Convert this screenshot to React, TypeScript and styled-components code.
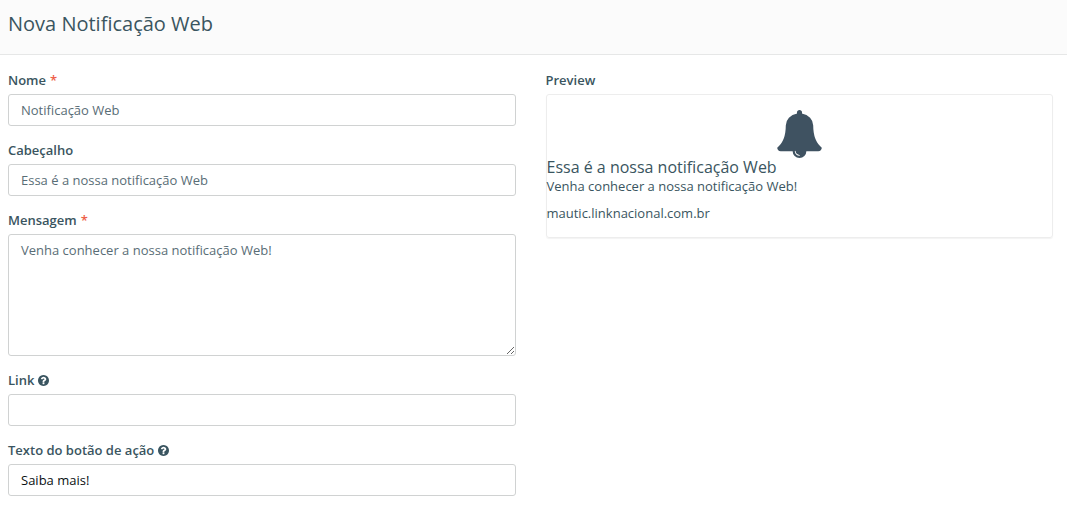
import { useId, useState } from "react";
import type { ReactNode } from "react";
import styled, { createGlobalStyle } from "styled-components";

const GlobalStyle = createGlobalStyle`
  *, *::before, *::after { box-sizing: border-box; }
  body {
    margin: 0;
    background: #fff;
    color: #3a5560;
    font: 13px/20px "Open Sans", "Noto Sans", sans-serif;
  }
`;

const PageHeader = styled.header`
  padding: 10px 8px 16px;
  background: #fbfbfb;
  border-bottom: 1px solid #e6e7e7;
`;

const PageTitle = styled.h1`
  margin: 0;
  font-size: 20px;
  line-height: 28px;
  font-weight: 400;
`;

const Columns = styled.main`
  display: grid;
  grid-template-columns: 1fr 1fr;
  align-items: start;
  gap: 30px;
  padding: 15px 14px 10px 8px;
`;

const Form = styled.form`
  display: flex;
  flex-direction: column;
  gap: 14px;
`;

const FieldGroup = styled.div`
  display: flex;
  flex-direction: column;
  gap: 4px;
`;

const Label = styled.label`
  display: flex;
  align-items: center;
  gap: 4px;
  font-weight: 600;
`;

const Required = styled.span`
  color: #ee5f4a;
`;

const Input = styled.input<{ $dark?: boolean }>`
  width: 100%;
  height: 32px;
  padding: 4px 12px;
  border: 1px solid #d0d2d2;
  border-radius: 3px;
  background: #fff;
  color: ${(p) => (p.$dark ? "#0a0f12" : "#596d76")};
  font: inherit;
`;

const TextArea = styled.textarea`
  display: block;
  width: 100%;
  height: 122px;
  padding: 5px 12px;
  border: 1px solid #d0d2d2;
  border-radius: 3px;
  background: #fff;
  color: #596d76;
  font: inherit;
  resize: vertical;
`;

const Preview = styled.section`
  display: flex;
  flex-direction: column;
  gap: 4px;
`;

const PreviewHeading = styled.h2`
  margin: 0;
  font-size: 13px;
  line-height: 20px;
  font-weight: 600;
`;

const PreviewCard = styled.div`
  padding: 15px 0 14px;
  border: 1px solid #ededed;
  border-radius: 3px;
  box-shadow: 0 1px 1px rgba(0, 0, 0, 0.05);
`;

const Bell = styled.svg`
  display: block;
  width: 45px;
  height: 48px;
  margin: 0 auto;
  fill: #3f5261;
`;

const NotificationTitle = styled.h3`
  margin: 0;
  font-size: 16px;
  line-height: 18px;
  font-weight: 400;
`;

const NotificationText = styled.p`
  margin: 0 0 7px;
`;

const SiteName = styled.div``;

const HelpSvg = styled.svg`
  width: 11px;
  height: 11px;
  fill: currentColor;
`;

function HelpIcon() {
  return (
    <HelpSvg viewBox="128 128 1536 1536" aria-hidden="true">
      <path d="M1024 1376v-192q0-14-9-23t-23-9h-192q-14 0-23 9t-9 23v192q0 14 9 23t23 9h192q14 0 23-9t9-23zm256-672q0-88-55.500-163t-138.500-116-170-41q-243 0-371 213-15 24 8 42l132 100q7 6 19 6 16 0 25-12 53-68 86-92 34-24 86-24 48 0 85.500 26t37.500 59q0 38-20 61t-68 45q-63 28-115.500 86.500t-52.500 125.500v36q0 14 9 23t23 9h192q14 0 23-9t9-23q0-19 21.500-49.500t54.500-49.500q32-18 49-28.500t46-35 44.500-48 28-60.500 12.500-81zm384 192q0 209-103 385.500t-279.500 279.500-385.500 103-385.500-103-279.500-279.500-103-385.500 103-385.500 279.500-279.500 385.500-103 385.500 103 279.500 279.500 103 385.500z" />
    </HelpSvg>
  );
}

function BellIcon() {
  return (
    <Bell viewBox="64 0 1664 1792" aria-hidden="true">
      <path d="M912 1696q0-16-16-16-59 0-101.500-42.500t-42.500-101.500q0-16-16-16t-16 16q0 73 51.500 124.500t124.500 51.500q16 0 16-16zm816-288q0 52-38 90t-90 38h-448q0 106-75 181t-181 75-181-75-75-181h-448q-52 0-90-38t-38-90q50-42 91-88t85-119.500 74.500-158.500 50-206 19.500-260q0-152 117-282.500t307-158.500q-8-19-8-39 0-40 28-68t68-28 68 28 28 68q0 20-8 39 190 28 307 158.500t117 282.500q0 139 19.500 260t50 206 74.500 158.500 85 119.500 91 88z" />
    </Bell>
  );
}

interface FieldProps {
  label: string;
  required?: boolean;
  help?: boolean;
  children: (id: string) => ReactNode;
}

function Field({ label, required, help, children }: FieldProps) {
  const id = useId();
  return (
    <FieldGroup>
      <Label htmlFor={id}>
        {label}
        {required && <Required>*</Required>}
        {help && <HelpIcon />}
      </Label>
      {children(id)}
    </FieldGroup>
  );
}

export default function App() {
  const [name, setName] = useState("Notificação Web");
  const [heading, setHeading] = useState("Essa é a nossa notificação Web");
  const [message, setMessage] = useState("Venha conhecer a nossa notificação Web!");
  const [link, setLink] = useState("");
  const [action, setAction] = useState("Saiba mais!");

  return (
    <>
      <GlobalStyle />
      <PageHeader>
        <PageTitle>Nova Notificação Web</PageTitle>
      </PageHeader>
      <Columns>
        <Form>
          <Field label="Nome" required>
            {(id) => <Input id={id} required value={name} onChange={(e) => setName(e.target.value)} />}
          </Field>
          <Field label="Cabeçalho">
            {(id) => <Input id={id} value={heading} onChange={(e) => setHeading(e.target.value)} />}
          </Field>
          <Field label="Mensagem" required>
            {(id) => (
              <TextArea
                id={id}
                required
                spellCheck={false}
                value={message}
                onChange={(e) => setMessage(e.target.value)}
              />
            )}
          </Field>
          <Field label="Link" help>
            {(id) => <Input id={id} type="url" value={link} onChange={(e) => setLink(e.target.value)} />}
          </Field>
          <Field label="Texto do botão de ação" help>
            {(id) => <Input id={id} $dark value={action} onChange={(e) => setAction(e.target.value)} />}
          </Field>
        </Form>
        <Preview>
          <PreviewHeading>Preview</PreviewHeading>
          <PreviewCard>
            <BellIcon />
            <NotificationTitle>{heading}</NotificationTitle>
            <NotificationText>{message}</NotificationText>
            <SiteName>mautic.linknacional.com.br</SiteName>
          </PreviewCard>
        </Preview>
      </Columns>
    </>
  );
}
